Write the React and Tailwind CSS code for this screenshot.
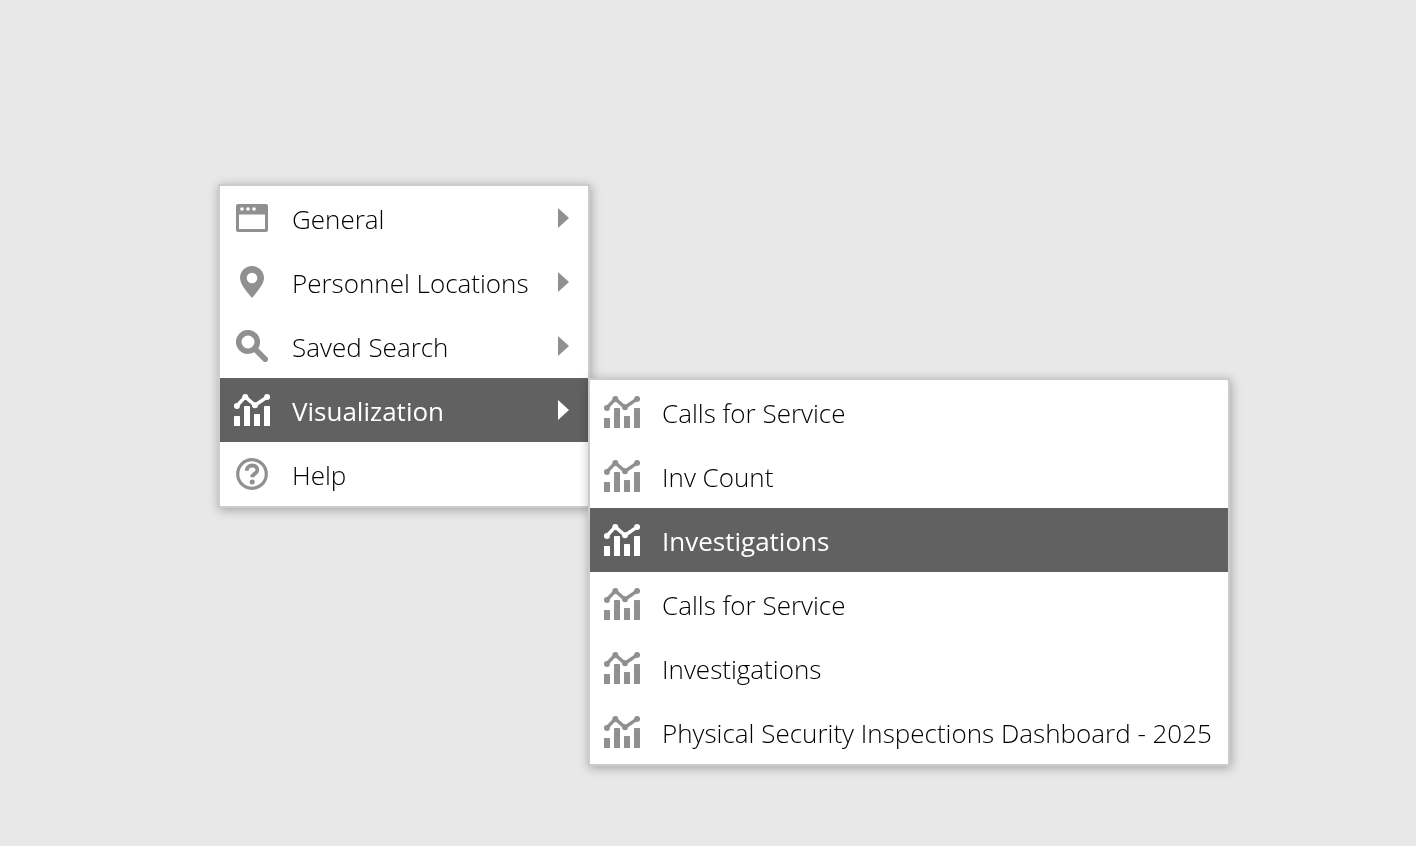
import React from "react";

const WindowIcon = () => (
  <svg width="32" height="28" viewBox="0 0 32 28" fill="currentColor">
    <path fillRule="evenodd" d="M2 0h28a2 2 0 0 1 2 2v24a2 2 0 0 1-2 2H2a2 2 0 0 1-2-2V2a2 2 0 0 1 2-2zM3 10.500V25h26V10.500z" />
    <circle cx="6" cy="5" r="1.800" fill="#fff" />
    <circle cx="12" cy="5" r="1.800" fill="#fff" />
    <circle cx="18" cy="5" r="1.800" fill="#fff" />
  </svg>
);

const PinIcon = () => (
  <svg width="24" height="32" viewBox="0 0 24 32" fill="currentColor">
    <path fillRule="evenodd" d="M12 0C5.400 0 0 5.200 0 11.800 0 18.500 7.500 26.500 12 32c4.500-5.500 12-13.500 12-20.200C24 5.200 18.600 0 12 0zM12 6.700a5.300 5.300 0 1 1 0 10.600 5.300 5.300 0 0 1 0-10.600z" />
  </svg>
);

const SearchIcon = () => (
  <svg width="32" height="32" viewBox="0 0 32 32" fill="none" stroke="currentColor">
    <circle cx="12" cy="12" r="9.300" strokeWidth="5.600" />
    <path d="M20 20 29.200 29.200" strokeWidth="5.600" strokeLinecap="round" />
  </svg>
);

const HelpIcon = () => (
  <svg width="32" height="32" viewBox="0 0 32 32" fill="none" stroke="currentColor">
    <circle cx="16" cy="16" r="14.300" strokeWidth="3.200" />
    <path d="M10.800 12.700c0-3.100 2.300-5.200 5.400-5.200 3 0 5.200 1.900 5.200 4.500 0 3.600-5.200 3.700-5.200 7.300" strokeWidth="3.800" />
    <circle cx="16.200" cy="24" r="2.500" fill="currentColor" stroke="none" />
  </svg>
);

const ChartIcon = () => (
  <svg width="36" height="32" viewBox="0 0 36 32" fill="currentColor">
    <rect x="0" y="22" width="6" height="10" rx="0.500" />
    <rect x="10" y="12" width="6" height="20" rx="0.500" />
    <rect x="20" y="20" width="6" height="12" rx="0.500" />
    <rect x="30" y="12" width="6" height="20" rx="0.500" />
    <path d="M2.700 12 11.300 2.900 21 11.300 33.300 2.900" fill="none" stroke="currentColor" strokeWidth="3.500" />
    <circle cx="2.900" cy="12" r="3" />
    <circle cx="11.300" cy="3" r="3" />
    <circle cx="21" cy="11.300" r="3" />
    <circle cx="33.100" cy="3" r="3" />
  </svg>
);

const Caret = ({ active }) => (
  <span className={`h-0 w-0 border-y-[10px] border-l-[11px] border-y-transparent ${active ? "border-l-white" : "border-l-[#909090]"}`} />
);

const mainItems = [
  { label: "General", icon: <WindowIcon />, arrow: true },
  { label: "Personnel Locations", icon: <PinIcon />, arrow: true },
  { label: "Saved Search", icon: <SearchIcon />, arrow: true },
  { label: "Visualization", icon: <ChartIcon />, arrow: true, active: true },
  { label: "Help", icon: <HelpIcon /> },
];

const subItems = [
  { label: "Calls for Service" },
  { label: "Inv Count" },
  { label: "Investigations", active: true },
  { label: "Calls for Service" },
  { label: "Investigations" },
  { label: "Physical Security Inspections Dashboard - 2025" },
];

export default function App() {
  return (
    <div className="flex h-[846px] items-start bg-[#e8e8e8] pl-[218px] pt-[184px] font-['Open_Sans',sans-serif] text-[26px]">
      <div className="w-[372px] border-2 border-[#cccccc] bg-white shadow-[1px_2px_10px_rgba(0,0,0,0.3)]">
        {mainItems.map((item) => (
          <div
            key={item.label}
            className={`flex h-[64px] items-center ${item.active ? "bg-[#616161] text-white" : "text-black"}`}
          >
            <span className={`flex w-[64px] justify-center ${item.active ? "text-white" : "text-[#909090]"}`}>
              {item.icon}
            </span>
            <span className={`ml-[8px] flex-1 pt-[2px] will-change-transform ${item.active ? "font-normal" : "font-light"}`}>
              {item.label}
            </span>
            {item.arrow && (
              <span className="mr-[19px] flex">
                <Caret active={item.active} />
              </span>
            )}
          </div>
        ))}
      </div>
      <div className="relative -ml-[2px] mt-[194px] w-[642px] border-2 border-[#cccccc] bg-white shadow-[1px_2px_10px_rgba(0,0,0,0.3)]">
        {subItems.map((item, i) => (
          <div
            key={i}
            className={`flex h-[64px] items-center ${item.active ? "bg-[#616161] text-white" : "text-black"}`}
          >
            <span className={`ml-[14px] flex ${item.active ? "text-white" : "text-[#909090]"}`}>
              <ChartIcon />
            </span>
            <span className={`ml-[22px] pt-[2px] will-change-transform ${item.active ? "font-normal" : "font-light"}`}>
              {item.label}
            </span>
          </div>
        ))}
      </div>
    </div>
  );
}
